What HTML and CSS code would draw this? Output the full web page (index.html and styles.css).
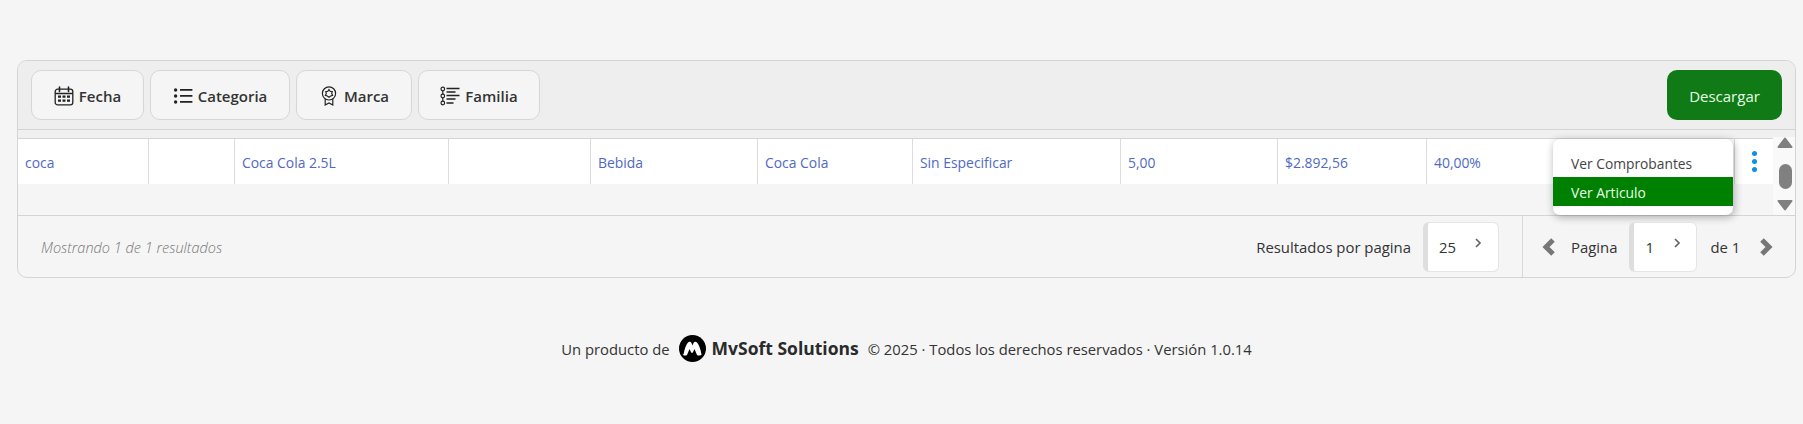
FILE: index.html
```html
<!DOCTYPE html>
<html lang="es">
<head>
<meta charset="utf-8">
<title>Reporte</title>
<link rel="stylesheet" href="styles.css">
</head>
<body>
<section class="panel">
  <header class="toolbar">
    <div class="filters">
      <button class="filter f-fecha">
        <svg class="ico" viewBox="0 0 20 20" fill="none" stroke="#222" stroke-width="1.3"><rect x="1.2" y="3.2" width="17.6" height="15.6" rx="2.4"/><path d="M1.2 7.4h17.6" stroke-width="1.5"/><path d="M5.5 1v4.4M14.5 1v4.4" stroke-linecap="round" stroke-width="1.6"/><path d="M4 9.4h3v2.4H4zM8.5 9.4h3v2.4h-3zM13 9.4h3v2.4h-3zM4 13.4h3v2.4H4zM8.5 13.4h3v2.4h-3zM13 13.4h3v2.4h-3z" fill="#222" stroke="none"/></svg>
        Fecha</button>
      <button class="filter f-cat">
        <svg class="ico" viewBox="0 0 20 20" fill="#222"><circle cx="2.6" cy="4" r="1.7"/><circle cx="2.6" cy="10" r="1.7"/><circle cx="2.6" cy="16" r="1.7"/><path d="M7 3.1h12.4v1.7H7zM7 9.1h12.4v1.7H7zM7 15.1h12.4v1.7H7z"/></svg>
        Categoria</button>
      <button class="filter f-marca">
        <svg class="ico" viewBox="0 0 20 20" fill="none" stroke="#222" stroke-width="1.2"><circle cx="10" cy="7.4" r="6.6"/><path d="M10 3.6l1.2 1.7 2 .3-.5 1.9.9 1.8-1.9.7-1.7 1.2-1.7-1.2-1.9-.7.9-1.8-.5-1.9 2-.3z"/><path d="M6.2 13v6l3.8-2 3.8 2v-6"/></svg>
        Marca</button>
      <button class="filter f-fam">
        <svg class="ico" viewBox="0 0 20 20" fill="none" stroke="#222" stroke-width="1.2"><circle cx="2.8" cy="3" r="1.8"/><circle cx="2.8" cy="10" r="1.8"/><circle cx="2.8" cy="17" r="1.8"/><path d="M2.8 4.8v3.4M2.8 11.8v3.4"/><path d="M6.5 2.5h13M6.5 6h9M6.5 9.5h13M6.5 13h9M6.5 17h7" stroke-width="1.3"/></svg>
        Familia</button>
    </div>
    <button class="download">Descargar</button>
  </header>
  <div class="band"></div>
  <div class="content">
    <div class="results">
      <div class="row">
        <div class="cell">coca</div>
        <div class="cell"></div>
        <div class="cell">Coca Cola 2.5L</div>
        <div class="cell"></div>
        <div class="cell">Bebida</div>
        <div class="cell">Coca Cola</div>
        <div class="cell">Sin Especificar</div>
        <div class="cell">5,00</div>
        <div class="cell">$2.892,56</div>
        <div class="cell">40,00%</div>
        <div class="cell actions"><span class="dots"><i></i><i></i><i></i></span></div>
      </div>
      <div class="menu">
        <div class="menu-item">Ver Comprobantes</div>
        <div class="menu-item active">Ver Articulo</div>
      </div>
    </div>
    <div class="scrollbar">
      <svg class="arrow" viewBox="0 0 16 11" fill="#808080" stroke="#808080" stroke-width="2" stroke-linejoin="round"><path d="M8 1.5l6.5 8.500h-13z"/></svg>
      <span class="thumb"></span>
      <svg class="arrow" viewBox="0 0 16 11" fill="#808080" stroke="#808080" stroke-width="2" stroke-linejoin="round"><path d="M8 9.5L14.500 1h-13z"/></svg>
    </div>
  </div>
  <footer class="pager">
    <div class="summary">Mostrando 1 de 1 resultados</div>
    <div class="per-page">
      <span>Resultados por pagina</span>
      <div class="select s-wide">25<svg class="chev" viewBox="0 0 8 12" fill="none" stroke="#666" stroke-width="1.7"><path d="M2 2l4 4-4 4"/></svg></div>
    </div>
    <div class="pages">
      <svg class="nav" viewBox="0 0 15 18" fill="none" stroke="#777" stroke-width="5"><path d="M12 2L5 9l7 7"/></svg>
      <span class="page-label">Pagina</span>
      <div class="select s-page">1<svg class="chev" viewBox="0 0 8 12" fill="none" stroke="#666" stroke-width="1.7"><path d="M2 2l4 4-4 4"/></svg></div>
      <span class="page-total">de 1</span>
      <svg class="nav" viewBox="0 0 15 18" fill="none" stroke="#777" stroke-width="5"><path d="M3 2l7 7-7 7"/></svg>
    </div>
  </footer>
</section>
<footer class="credits">
  <span>Un producto de</span>
  <span class="brand">
    <svg class="logo" viewBox="0 0 27 27"><circle cx="13.5" cy="13.5" r="13.5" fill="#000"/><path d="M4.500 19.500C5.500 14 7 9.500 9 7.500c1.500-1.300 3-.8 3.800 1.200l.7 1.800.7-1.800c.8-2 2.300-2.500 3.800-1.200 2 2 3.500 6.500 4.500 12-.3 1.200-3.500 1.500-4.500.5l-2.500-6-1.800 3.800h-1.400l-1.800-3.800-2.500 6c-1 1-4.200.7-4.500-.5z" fill="#fff"/></svg>
    <b>MvSoft Solutions</b>
  </span>
  <span>© 2025 · Todos los derechos reservados · Versión 1.0.14</span>
</footer>
</body>
</html>
```

FILE: styles.css
```css
* { box-sizing: border-box; }
html, body { margin: 0; height: 100%; }
body {
  background: #f5f5f5;
  font-family: "Open Sans", "Noto Sans", sans-serif;
  font-size: 14px;
  color: #333;
  overflow: hidden;
  padding: 60px 7px 0 17px;
}
.panel {
  height: 218px;
  border: 1px solid #d4d4d4;
  border-radius: 10px;
  display: flex;
  flex-direction: column;
  overflow: hidden;
}
.toolbar {
  height: 69px;
  flex: none;
  background: #eeeeee;
  border-bottom: 1px solid #d4d4d4;
  display: flex;
  justify-content: space-between;
  padding: 9px 13px 9px 13px;
}
.filters { display: flex; gap: 6px; }
.filter {
  height: 50px;
  display: flex;
  align-items: center;
  justify-content: center;
  gap: 5px;
  background: #f5f5f5;
  border: 1px solid #d6d6d6;
  border-radius: 10px;
  font: 600 15px "Open Sans", sans-serif;
  color: #333;
  padding: 1px 0 0;
}
.f-fecha { width: 113px; }
.f-cat { width: 140px; }
.f-marca { width: 116px; }
.f-fam { width: 122px; }
.ico { width: 20px; height: 20px; flex: none; }
.download {
  width: 115px;
  height: 50px;
  background: #107a16;
  color: #e6ffe6;
  border: 0;
  border-radius: 10px;
  padding: 1px 0 0;
  font: 400 15px "Open Sans", sans-serif;
}
.band {
  height: 9px;
  flex: none;
  background: #f0f0f0;
  border-bottom: 1px solid #d4d4d4;
}
.content {
  flex: none;
  height: 77px;
  display: flex;
  border-bottom: 1px solid #d4d4d4;
}
.results { flex: 1; position: relative; }
.row {
  height: 45px;
  background: #fff;
  display: grid;
  grid-template-columns: 131px 86px 214px 142px 167px 155px 208px 157px 149px 308px 38px;
  color: #4f69c2;
  font-size: 13.9px;
}
.cell {
  display: flex;
  align-items: center;
  padding: 2px 0 0 7px;
  border-right: 1px solid #dcdcdc;
}
.actions { border-right: 0; padding: 0; justify-content: center; }
.dots { display: flex; flex-direction: column; gap: 3px; }
.dots i { width: 5px; height: 5px; border-radius: 50%; background: #0d8fe8; }
.menu {
  position: absolute;
  left: 1535px;
  top: 0;
  width: 180px;
  height: 76px;
  background: #fff;
  border-radius: 7px;
  box-shadow: 1px 2px 8px rgba(0, 0, 0, .32);
  padding-top: 10px;
  overflow: hidden;
  font-size: 13.8px;
}
.menu-item { height: 28px; padding: 1px 0 0 18px; display: flex; align-items: center; color: #444; }
.menu-item.active { height: 29px; padding-top: 2px; background: #008000; color: #e6ffe6; }
.scrollbar {
  width: 24px;
  flex: none;
  background: #f9f9f9;
  display: flex;
  flex-direction: column;
  align-items: center;
  justify-content: space-between;
  margin-top: -2px;
  padding-bottom: 4px;
  position: relative;
}
.arrow { width: 16px; height: 11px; flex: none; }
.thumb { width: 13px; height: 25px; border-radius: 7px; background: #808080; margin-top: 4px; }
.pager {
  flex: 1;
  display: flex;
  align-items: center;
  font-size: 14.9px;
}
.summary { flex: 1; padding: 2px 0 0 23px; font-size: 14.5px; font-style: italic; font-weight: 300; color: #777; }
.per-page { display: flex; align-items: center; gap: 12px; padding-right: 23px; height: 100%; }
.pages {
  width: 273px;
  height: 100%;
  display: flex;
  align-items: center;
  border-left: 1px solid #d9d9d9;
  padding-left: 18px;
}
.page-label { margin: 0 12px 0 15px; }
.page-total { margin: 0 19px 0 13px; }
.nav { width: 15px; height: 18px; flex: none; }
.select {
  height: 50px;
  background: #fff;
  border: 1px solid #e4e4e4;
  border-left: 5px solid #dedede;
  border-radius: 6px;
  display: flex;
  align-items: center;
  padding: 1px 0 0 11px;
  position: relative;
}
.s-wide { width: 76px; }
.s-page { width: 68px; }
.chev { position: absolute; top: 14px; width: 8px; height: 12px; }
.s-wide .chev { left: 46px; }
.s-page .chev { left: 39px; }
.credits {
  margin-top: 57px;
  display: flex;
  align-items: center;
  justify-content: center;
  gap: 9px;
  font-size: 14.8px;
  color: #333;
}
.brand { display: flex; align-items: center; gap: 6px; }
.brand b { font-size: 17.5px; font-weight: 700; color: #2a2a2a; position: relative; top: -1px; }
.logo { width: 27px; height: 27px; flex: none; }
```
